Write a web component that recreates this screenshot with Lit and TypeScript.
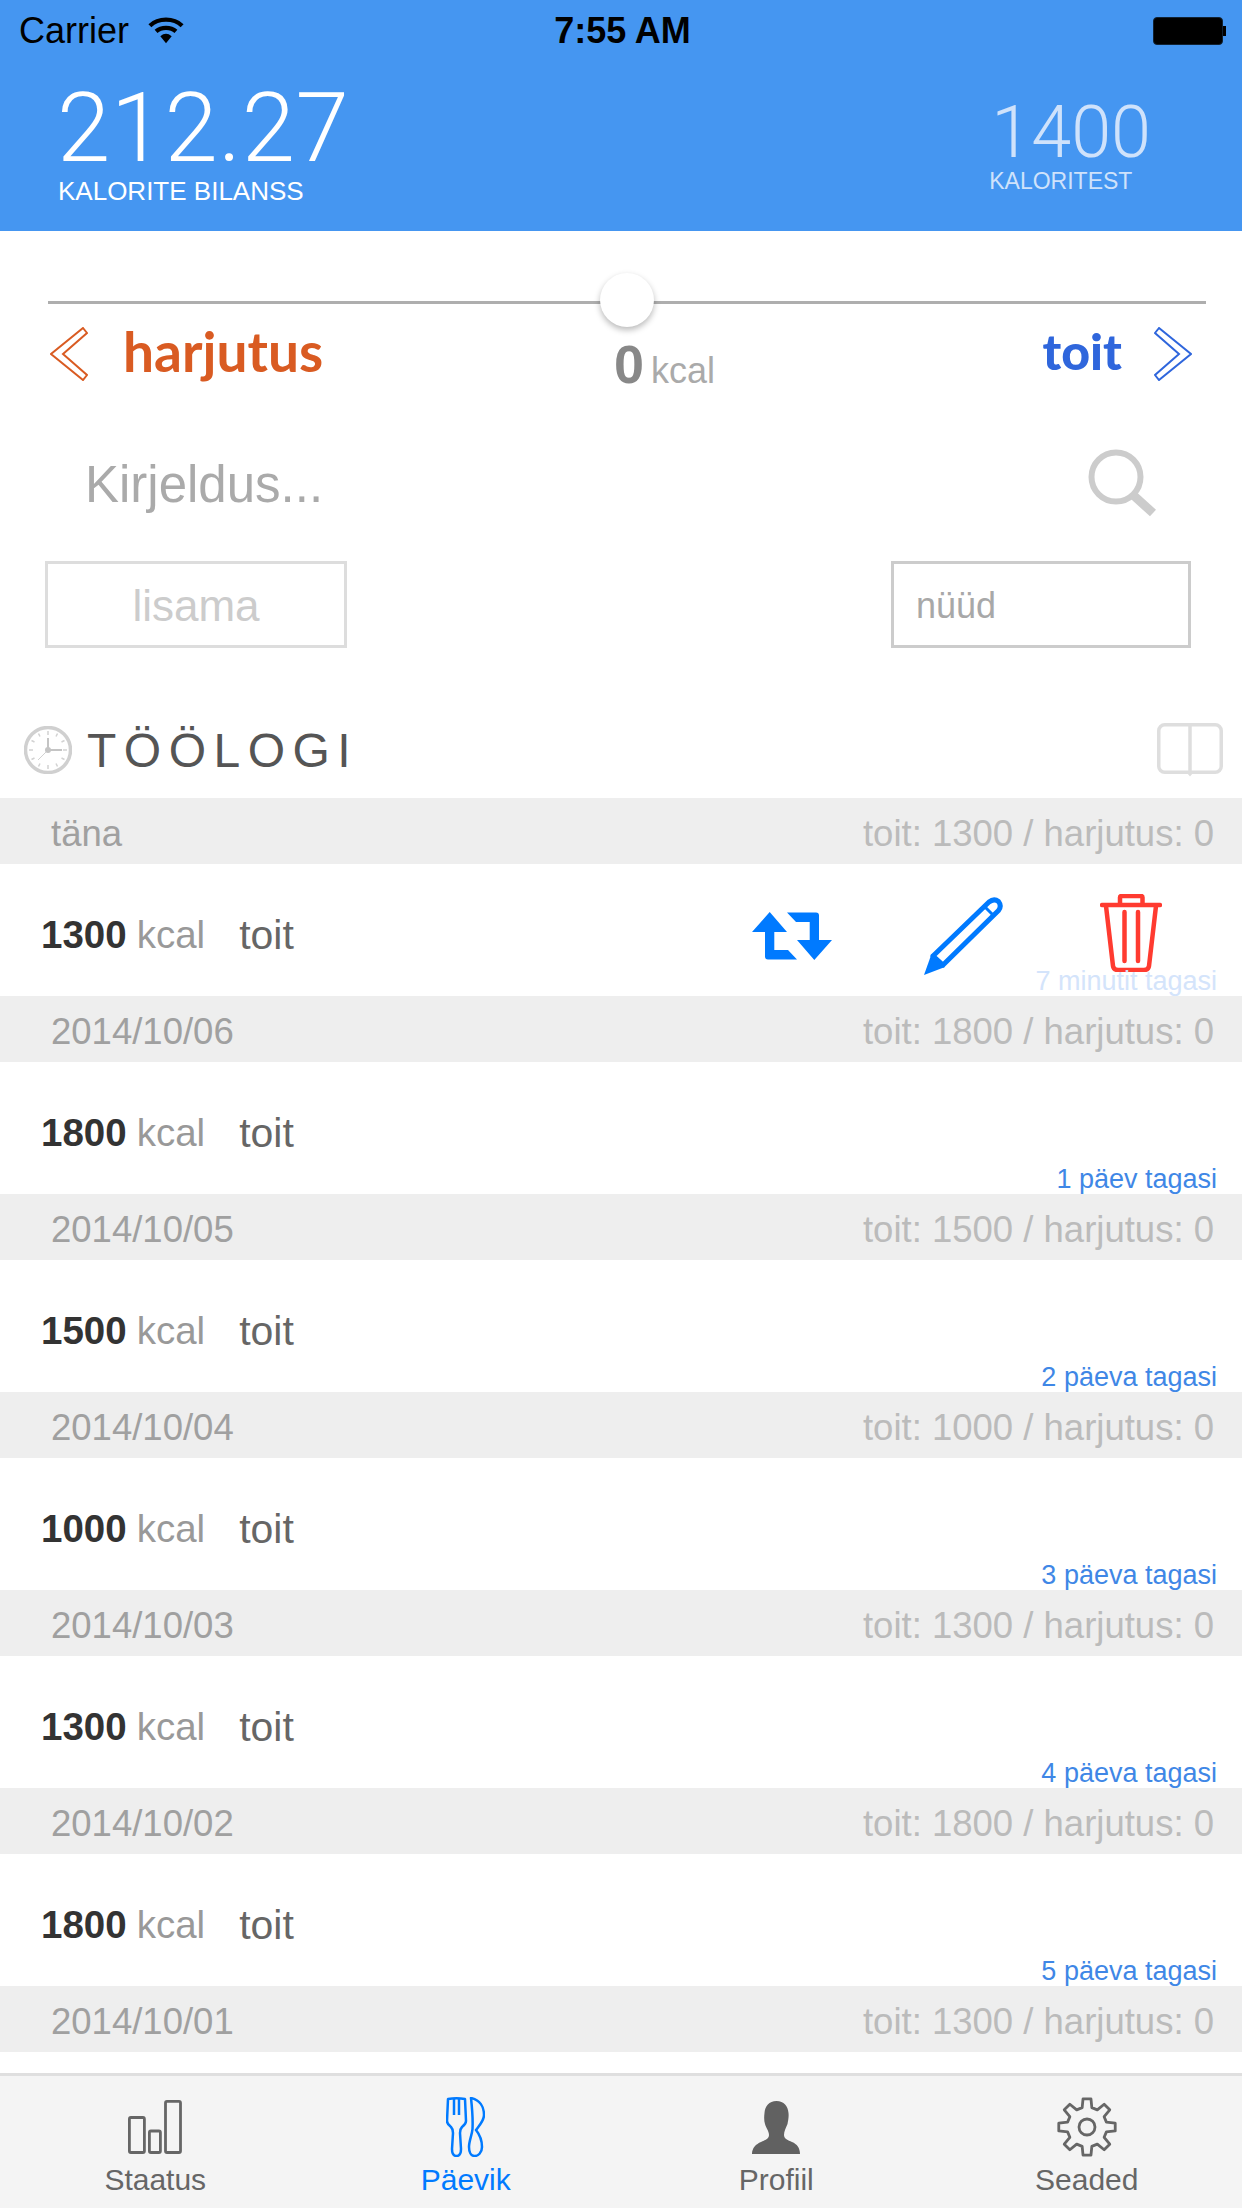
import { LitElement, css, html, svg } from 'lit';
import { customElement } from 'lit/decorators.js';

interface Day {
  label: string;
  kcal: number;
  ago: string;
  active?: boolean;
}

const days: Day[] = [
  { label: 'täna', kcal: 1300, ago: '7 minutit tagasi', active: true },
  { label: '2014/10/06', kcal: 1800, ago: '1 päev tagasi' },
  { label: '2014/10/05', kcal: 1500, ago: '2 päeva tagasi' },
  { label: '2014/10/04', kcal: 1000, ago: '3 päeva tagasi' },
  { label: '2014/10/03', kcal: 1300, ago: '4 päeva tagasi' },
  { label: '2014/10/02', kcal: 1800, ago: '5 päeva tagasi' },
];

// 8 tooth gear outline, centred on 30,30
function gearPath() {
  const pt = (deg: number, r: number) => {
    const a = ((deg - 90) * Math.PI) / 180;
    return `${(30 + r * Math.cos(a)).toFixed(2)} ${(30 + r * Math.sin(a)).toFixed(2)}`;
  };
  let d = '';
  for (let i = 0; i < 8; i++) {
    const a = i * 45;
    d += `${i ? 'L' : 'M'}${pt(a - 14, 20)} L${pt(a - 8, 28.5)} L${pt(a + 8, 28.5)} L${pt(a + 14, 20)} `;
  }
  return d + 'Z';
}

const chevron = svg`<path d="M33 1 37 6 13 27 37 48 33 53 1 27Z" fill="none" stroke="currentColor" stroke-width="2" />`;

const icons = {
  wifi: html`<svg class="wifi" viewBox="0 0 38 28">
    <path d="M2 9.500C11 1 27 1 36 9.500" fill="none" stroke="#000" stroke-width="4.500" />
    <path d="M8.500 15.500C14 10.500 24 10.500 29.500 15.500" fill="none" stroke="#000" stroke-width="4.500" />
    <path d="M13 20.500Q19 15.500 25 20.500L19 28Z" fill="#000" />
  </svg>`,
  search: html`<svg class="search" viewBox="0 0 68 68">
    <circle cx="28" cy="28" r="24.500" fill="none" stroke="#ccc" stroke-width="6" />
    <path d="M44 45 65 64" stroke="#ccc" stroke-width="9" />
  </svg>`,
  clock: html`<svg class="clock" viewBox="0 0 48 48">
    <circle cx="24" cy="24" r="22.500" fill="none" stroke="#d0d0d0" stroke-width="3.500" />
    <path
      d="M24 5v4M24 39v4M5 24h4M39 24h4M14.500 7.500l1.500 3M33.500 7.500l-1.500 3M7.500 14.500l3 1.500M40.500 14.500l-3 1.500M7.500 33.500l3-1.500M40.500 33.500l-3-1.500M14.500 40.500l1.500-3M33.500 40.500l-1.500-3"
      stroke="#d2d2d2"
      stroke-width="1.500"
    />
    <path d="M24 12v12h14" fill="none" stroke="#c4c4c4" stroke-width="2" />
    <path d="M24 24 14 34" stroke="#d2d2d2" stroke-width="1" />
    <circle cx="24" cy="24" r="3" fill="#c4c4c4" />
  </svg>`,
  book: html`<svg class="book" viewBox="0 0 66 54">
    <rect x="1.750" y="1.750" width="62.500" height="47.500" rx="6" fill="none" stroke="#dedede" stroke-width="3.500" />
    <path d="M33 1v50" stroke="#dedede" stroke-width="3.500" />
    <path d="M30 50h6l-3 3.500Z" fill="#dedede" />
  </svg>`,
  retweet: html`<svg class="retweet" viewBox="0 0 80 48">
    <path d="M17.700 0 35 20H22.300V38H36L45 47.500H16Q13 47.500 13 44.500V20H0Z" fill="#007aff" />
    <path d="M62.300 48 45 28H57.700V10H44L35 .5H64Q67 .5 67 3.500V28H80Z" fill="#007aff" />
  </svg>`,
  pencil: html`<svg class="pencil" viewBox="0 0 79 78">
    <path
      d="M9 59 65 5Q70 1 74.500 4.500 78 9 74.500 13.500L19 68Z"
      fill="none"
      stroke="#007aff"
      stroke-width="5"
      stroke-linejoin="round"
    />
    <path d="M61 10 70 19" stroke="#007aff" stroke-width="3" />
    <path d="M0 78 7.500 57 21 70Z" fill="#007aff" />
  </svg>`,
  trash: html`<svg class="trash" viewBox="0 0 62 78">
    <path d="M2 11H60" stroke="#ff3b30" stroke-width="4.500" stroke-linecap="round" />
    <path d="M20 10V3.500Q20 2 21.500 2H41Q42.500 2 42.500 3.500V10" fill="none" stroke="#ff3b30" stroke-width="4.500" />
    <path d="M6 12 13 72Q13.500 76 18 76H44Q48.500 76 49 72L56 12" fill="none" stroke="#ff3b30" stroke-width="4.500" />
    <path d="M24.500 18V67M38 18V67" stroke="#ff3b30" stroke-width="4.500" stroke-linecap="round" />
  </svg>`,
  bars: html`<svg viewBox="0 0 54 54" width="54" height="54">
    <g fill="none" stroke="#666" stroke-width="2.800">
      <rect x="1.400" y="17.500" width="15" height="35" rx="1.500" />
      <rect x="21.400" y="31" width="11" height="21.500" rx="1.500" />
      <rect x="37.500" y="1.400" width="15" height="51.100" rx="1.500" />
    </g>
  </svg>`,
  food: html`<svg viewBox="0 0 39 60" width="39" height="60">
    <g fill="none" stroke="#007aff" stroke-width="2.500" stroke-linejoin="round">
      <path
        d="M2 2Q10.500 .5 19 2L20 24Q20 27 16 30 14 32 14 36L15 52Q15 59 10.500 59 6 59 6 52L7 36Q7 32 5 30 1 27 1 24Z"
      />
      <path d="M8 2V18M13 2V18" />
      <path
        d="M25 1C34 3 38 10 38 18 38 24 32 30 30 33 34 38 36 44 36 50 36 56 32 59 28.500 59 25 59 23 55 23 50 23 44 26 38 26.500 32 27 22 26 10 25 1Z"
      />
    </g>
  </svg>`,
  person: html`<svg viewBox="0 0 48 53" width="48" height="53">
    <path
      d="M24.500 0C32 0 36 5 36.500 12 37 16 36 20 35.500 23 34 27 32 30 32 34 32 38 36 39 40 41 45 43 48 47 48 53L0 53C0 47 4 43 9 41 13 39 17 38 17 34 17 30 14 27 13 23 12 20 12 16 12.500 12 13 5 17 0 24.500 0Z"
      fill="#616161"
    />
  </svg>`,
  gear: html`<svg viewBox="0 0 60 60" width="60" height="60">
    <path d="${gearPath()}" fill="none" stroke="#666" stroke-width="2.800" stroke-linejoin="round" />
    <circle cx="30" cy="30" r="8" fill="none" stroke="#666" stroke-width="2.800" />
  </svg>`,
};

@customElement('app-root')
export class AppRoot extends LitElement {
  static styles = css`
    :host {
      display: flex;
      flex-direction: column;
      width: 1242px;
      height: 2208px;
      overflow: hidden;
      background: #fff;
      font-family: 'Liberation Sans', Arial, sans-serif;
      color: #333;
    }

    svg {
      display: block;
      flex: none;
    }

    .top {
      flex: none;
      height: 231px;
      box-sizing: border-box;
      background: #4596f1;
      color: #fff;
    }

    .status {
      display: grid;
      grid-template-columns: 1fr auto 1fr;
      align-items: center;
      height: 62px;
      padding: 0 16px 0 19px;
      color: #000;
      font-size: 36px;
      line-height: 62px;
    }

    .carrier {
      display: flex;
      align-items: center;
      gap: 19px;
    }

    .wifi {
      width: 36px;
      height: 28px;
      margin-top: -2px;
    }

    .clock-time {
      font-size: 36px;
      font-weight: 700;
    }

    .battery {
      justify-self: end;
      display: flex;
      align-items: center;
    }

    .battery i {
      display: block;
      width: 68px;
      height: 26px;
      background: #000;
      border: 1px solid #123;
      border-radius: 4px;
    }

    .battery b {
      display: block;
      width: 3px;
      height: 10px;
      background: #000;
    }

    .summary {
      display: flex;
      justify-content: space-between;
      padding: 0 91px 0 57px;
    }

    .balance-num {
      font-family: Roboto, sans-serif;
      font-weight: 300;
      font-size: 96px;
      letter-spacing: 0.5px;
      line-height: 96px;
      margin-top: 18px;
    }

    .balance-label {
      font-size: 26px;
      line-height: 30px;
      margin-left: 1px;
    }

    .cal {
      color: #cfe2fb;
    }

    .cal-num {
      font-family: Roboto, sans-serif;
      font-weight: 300;
      font-size: 72px;
      line-height: 68px;
      margin-top: 37px;
    }

    .cal-label {
      font-size: 23px;
      line-height: 28px;
      margin-left: -2px;
    }

    .content {
      flex: 1;
      min-height: 0;
      overflow: hidden;
    }

    .track {
      position: relative;
      height: 3px;
      margin: 70px 36px 0 48px;
      background: #aeaeae;
    }

    .thumb {
      position: absolute;
      left: 552px;
      top: -28px;
      width: 54px;
      height: 54px;
      border-radius: 50%;
      background: #fff;
      box-shadow: 0 3px 6px rgba(0, 0, 0, 0.28);
    }

    .scale {
      display: flex;
      align-items: flex-start;
      height: 90px;
      margin-top: 23px;
      padding: 0 50px;
    }

    .side {
      display: flex;
      align-items: flex-start;
      font-family: Lato, sans-serif;
      line-height: 48px;
    }

    .side svg {
      width: 38px;
      height: 54px;
    }

    .side.left {
      width: 564px;
      gap: 35px;
      color: #d95b22;
      font-size: 55px;
      font-weight: 700;
    }

    .side.right {
      margin-left: auto;
      gap: 32px;
      color: #2f66dc;
      font-size: 50px;
      font-weight: 900;
    }

    .side.right svg {
      transform: scaleX(-1);
    }

    .amount {
      display: flex;
      align-items: baseline;
      gap: 7px;
      margin-top: 11px;
      font-size: 36px;
      line-height: 52px;
      color: #aaa;
    }

    .amount b {
      font-size: 54px;
      color: #888;
    }

    .desc {
      display: flex;
      align-items: center;
      justify-content: space-between;
      height: 68px;
      margin-top: 32px;
      padding: 0 86px 0 85px;
      font-size: 51px;
      color: #aaa;
    }

    .desc span {
      margin-top: 2px;
    }

    .search {
      width: 68px;
      height: 68px;
    }

    .buttons {
      display: flex;
      justify-content: space-between;
      margin-top: 44px;
      padding: 0 51px 0 45px;
    }

    .btn {
      box-sizing: border-box;
      width: 302px;
      height: 87px;
      border: 3px solid #ddd;
      color: #ccc;
      font-size: 44px;
      line-height: 83px;
      text-align: center;
    }

    .btn.now {
      width: 300px;
      border-color: #ccc;
      color: #a8a8a8;
      font-size: 36px;
      text-align: left;
      padding-left: 22px;
    }

    .log-head {
      display: flex;
      align-items: center;
      height: 53px;
      margin-top: 75px;
      padding: 0 19px 0 24px;
      font-size: 48px;
      letter-spacing: 7.500px;
      color: #555;
    }

    .log-head span {
      margin-top: 2px;
    }

    .clock {
      width: 48px;
      height: 48px;
      margin-right: 15px;
    }

    .book {
      width: 66px;
      height: 54px;
      margin-left: auto;
    }

    .day {
      display: flex;
      justify-content: space-between;
      height: 66px;
      padding: 0 28px 0 51px;
      background: #eee;
      font-size: 36.500px;
      line-height: 71px;
      color: #a0a0a0;
    }

    .log-head + .day {
      margin-top: 22px;
    }

    .day span:last-child {
      color: #bbb;
    }

    .row {
      position: relative;
      display: flex;
      align-items: flex-start;
      height: 132px;
      padding: 0 80px 0 41px;
      font-size: 38.500px;
      line-height: 142px;
      color: #999;
    }

    .row b {
      color: #333;
    }

    .row .kcal {
      margin-left: 10px;
    }

    .row .kind {
      margin-left: 34px;
      color: #666;
      font-size: 41px;
    }

    .actions {
      display: flex;
      align-items: flex-start;
      gap: 92px;
      margin-left: auto;
    }

    .retweet {
      width: 80px;
      height: 48px;
      margin-top: 48px;
    }

    .pencil {
      width: 79px;
      height: 78px;
      margin-top: 33px;
    }

    .trash {
      width: 62px;
      height: 78px;
      margin-top: 30px;
      margin-left: 5px;
    }

    .ago {
      position: absolute;
      right: 25px;
      bottom: -1px;
      font-size: 27px;
      line-height: 32px;
      color: #3f87e6;
    }

    .ago.fade {
      color: #d4e4fb;
    }

    .tabs {
      flex: none;
      display: grid;
      grid-template-columns: repeat(4, 1fr);
      box-sizing: border-box;
      height: 135px;
      border-top: 3px solid #dfdfdf;
      background: #f4f4f4;
      color: #666;
      font-size: 30px;
    }

    .tab {
      display: flex;
      flex-direction: column;
      align-items: center;
    }

    .tab .ico {
      display: flex;
      align-items: center;
      height: 66px;
      margin-top: 18px;
    }

    .tab span {
      line-height: 34px;
      margin-top: 3px;
    }

    .tab.on {
      color: #007aff;
    }
  `;

  render() {
    return html`
      <header class="top">
        <div class="status">
          <div class="carrier">Carrier ${icons.wifi}</div>
          <div class="clock-time">7:55 AM</div>
          <div class="battery"><i></i><b></b></div>
        </div>
        <div class="summary">
          <div>
            <div class="balance-num">212.27</div>
            <div class="balance-label">KALORITE BILANSS</div>
          </div>
          <div class="cal">
            <div class="cal-num">1400</div>
            <div class="cal-label">KALORITEST</div>
          </div>
        </div>
      </header>

      <main class="content">
        <div class="track"><div class="thumb"></div></div>
        <div class="scale">
          <div class="side left">
            <svg viewBox="0 0 38 54">${chevron}</svg>
            <span>harjutus</span>
          </div>
          <div class="amount"><b>0</b><span>kcal</span></div>
          <div class="side right">
            <span>toit</span>
            <svg viewBox="0 0 38 54">${chevron}</svg>
          </div>
        </div>
        <div class="desc"><span>Kirjeldus...</span>${icons.search}</div>
        <div class="buttons">
          <div class="btn">lisama</div>
          <div class="btn now">nüüd</div>
        </div>
        <div class="log-head">${icons.clock}<span>TÖÖLOGI</span>${icons.book}</div>
        ${days.map((d) => this.renderDay(d))}
        <div class="day">
          <span>2014/10/01</span>
          <span>toit: 1300 / harjutus: 0</span>
        </div>
      </main>

      <nav class="tabs">
        ${this.renderTab('Staatus', icons.bars)} ${this.renderTab('Päevik', icons.food, true)}
        ${this.renderTab('Profiil', icons.person)} ${this.renderTab('Seaded', icons.gear)}
      </nav>
    `;
  }

  renderDay(d: Day) {
    return html`
      <div class="day">
        <span>${d.label}</span>
        <span>toit: ${d.kcal} / harjutus: 0</span>
      </div>
      <div class="row">
        <b>${d.kcal}</b><span class="kcal">kcal</span><span class="kind">toit</span>
        ${d.active
          ? html`<div class="actions">${icons.retweet}${icons.pencil}${icons.trash}</div>`
          : ''}
        <div class="ago ${d.active ? 'fade' : ''}">${d.ago}</div>
      </div>
    `;
  }

  renderTab(label: string, icon: unknown, on = false) {
    return html`
      <div class="tab ${on ? 'on' : ''}">
        <div class="ico">${icon}</div>
        <span>${label}</span>
      </div>
    `;
  }
}
